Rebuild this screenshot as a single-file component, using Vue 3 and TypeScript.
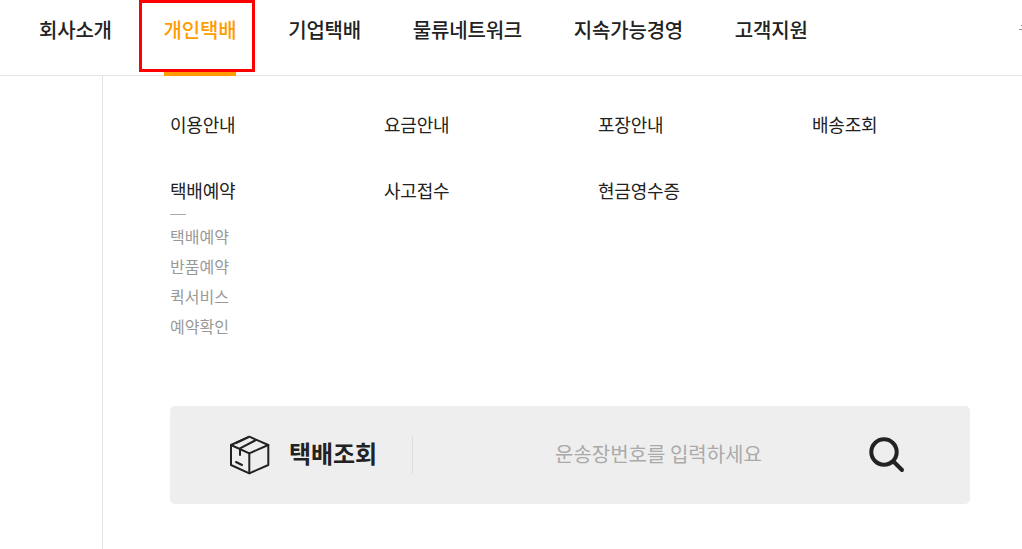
<script setup lang="ts">
interface NavItem { label: string; active?: boolean }
const navItems: NavItem[] = [
  { label: '회사소개' },
  { label: '개인택배', active: true },
  { label: '기업택배' },
  { label: '물류네트워크' },
  { label: '지속가능경영' },
  { label: '고객지원' },
]
const menus: { label: string; subs?: string[] }[] = [
  { label: '이용안내' },
  { label: '요금안내' },
  { label: '포장안내' },
  { label: '배송조회' },
  { label: '택배예약', subs: ['택배예약', '반품예약', '퀵서비스', '예약확인'] },
  { label: '사고접수' },
  { label: '현금영수증' },
]
</script>

<template>
  <div class="page">
    <header class="header">
      <nav class="nav">
        <a v-for="item in navItems" :key="item.label" class="nav-item" :class="{ active: item.active }">
          <span class="nav-label">{{ item.label }}</span>
        </a>
      </nav>
      <div class="highlight"></div>
      <div class="clipped"><i></i><b></b></div>
    </header>
    <main class="main">
      <div class="menu-grid">
        <div v-for="m in menus" :key="m.label" class="menu-col">
          <div class="menu-title">{{ m.label }}</div>
          <template v-if="m.subs">
            <div class="dash"></div>
            <ul class="sub-list">
              <li v-for="s in m.subs" :key="s">{{ s }}</li>
            </ul>
          </template>
        </div>
      </div>
      <section class="search">
        <div class="search-title">
          <svg class="box-icon" width="42" height="40" viewBox="0 0 42 40" fill="none" stroke="#222" stroke-width="2" stroke-linejoin="round" stroke-linecap="round">
            <path d="M20.3 1.7 39.3 10V30L20.3 38.3 2 30V10Z" />
            <path d="M2 10 20.3 18.3 39.3 10M20.3 18.3V38.3" />
            <path d="M19 2.3 7 8M27 5 11 13.3V20" />
            <path d="M7 27 13 30" />
          </svg>
          <strong>택배조회</strong>
        </div>
        <div class="search-input">운송장번호를 입력하세요</div>
        <svg class="search-icon" width="36" height="36" viewBox="0 0 36 36" fill="none" stroke="#222" stroke-linecap="round">
          <circle cx="15" cy="15" r="12.7" stroke-width="4" />
          <path d="M25 25 33 33" stroke-width="4" />
        </svg>
      </section>
    </main>
  </div>
</template>

<style>
html, body { margin: 0; background: #fff; overflow: hidden; }
</style>

<style scoped>
.page {
  width: 1022px;
  height: 549px;
  overflow: hidden;
  font-family: "Noto Sans CJK KR", "Noto Sans", sans-serif;
  color: #222;
}
.header {
  position: relative;
  height: 75px;
  border-bottom: 1px solid #e4e4e4;
}
.nav {
  display: flex;
  height: 76px;
  padding-left: 14px;
}
.nav-item {
  display: flex;
  padding: 0 25px;
  height: 76px;
  box-sizing: border-box;
  margin-right: 1.8px;
}
.nav-label {
  display: block;
  height: 76px;
  box-sizing: border-box;
  line-height: 60px;
  font-size: 20px;
  font-weight: 500;
  letter-spacing: -0.2px;
  white-space: nowrap;
  color: #222;
}
.nav-item.active .nav-label {
  color: #ff9c00;
  border-bottom: 4px solid #ff9c00;
}
.highlight {
  position: absolute;
  left: 139px;
  top: 0;
  width: 116px;
  height: 72px;
  box-sizing: border-box;
  border: 3px solid #ff0000;
}
.clipped {
  position: absolute;
  right: 0;
  top: 25px;
  width: 3px;
  height: 6px;
}
.clipped i {
  position: absolute;
  left: 2px;
  top: 0;
  width: 1px;
  height: 1px;
  background: #777;
}
.clipped b {
  position: absolute;
  left: 0;
  top: 4px;
  width: 3px;
  height: 1px;
  background: #998f7c;
}
.main {
  margin-left: 102px;
  height: 473px;
  border-left: 1px solid #e4e4e4;
  padding: 0 52px 0 67px;
}
.menu-grid {
  display: grid;
  grid-template-columns: repeat(4, 214px);
  grid-auto-rows: min-content;
  height: 330px;
  padding-top: 35px;
  box-sizing: border-box;
}
.menu-col {
  min-height: 66px;
}
.menu-title {
  font-size: 18px;
  line-height: 26px;
  letter-spacing: -0.2px;
  color: #222;
  white-space: nowrap;
}
.dash {
  width: 16px;
  height: 1px;
  margin-top: 11px;
  background: #aaa;
}
.sub-list {
  list-style: none;
  margin: 6px 0 0;
  padding: 0;
}
.sub-list li {
  font-size: 16px;
  line-height: 30px;
  color: #999;
  white-space: nowrap;
}
.search {
  display: flex;
  align-items: center;
  width: 800px;
  height: 98px;
  box-sizing: border-box;
  background: #eee;
  border-radius: 5px;
}
.search-title {
  display: flex;
  align-items: center;
  width: 243px;
  height: 38px;
  box-sizing: border-box;
  padding-left: 59px;
  border-right: 1px solid #ddd;
}
.box-icon {
  flex: none;
}
.search-title strong {
  margin-left: 18px;
  margin-bottom: 5px;
  font-size: 24px;
  line-height: 32px;
  font-weight: 700;
  color: #222;
  white-space: nowrap;
  letter-spacing: -0.1px;
}
.search-input {
  margin-left: 142px;
  margin-bottom: 3px;
  width: 314px;
  font-size: 20px;
  line-height: 28px;
  color: #aaa;
  white-space: nowrap;
}
.search-icon {
  flex: none;
}
</style>
